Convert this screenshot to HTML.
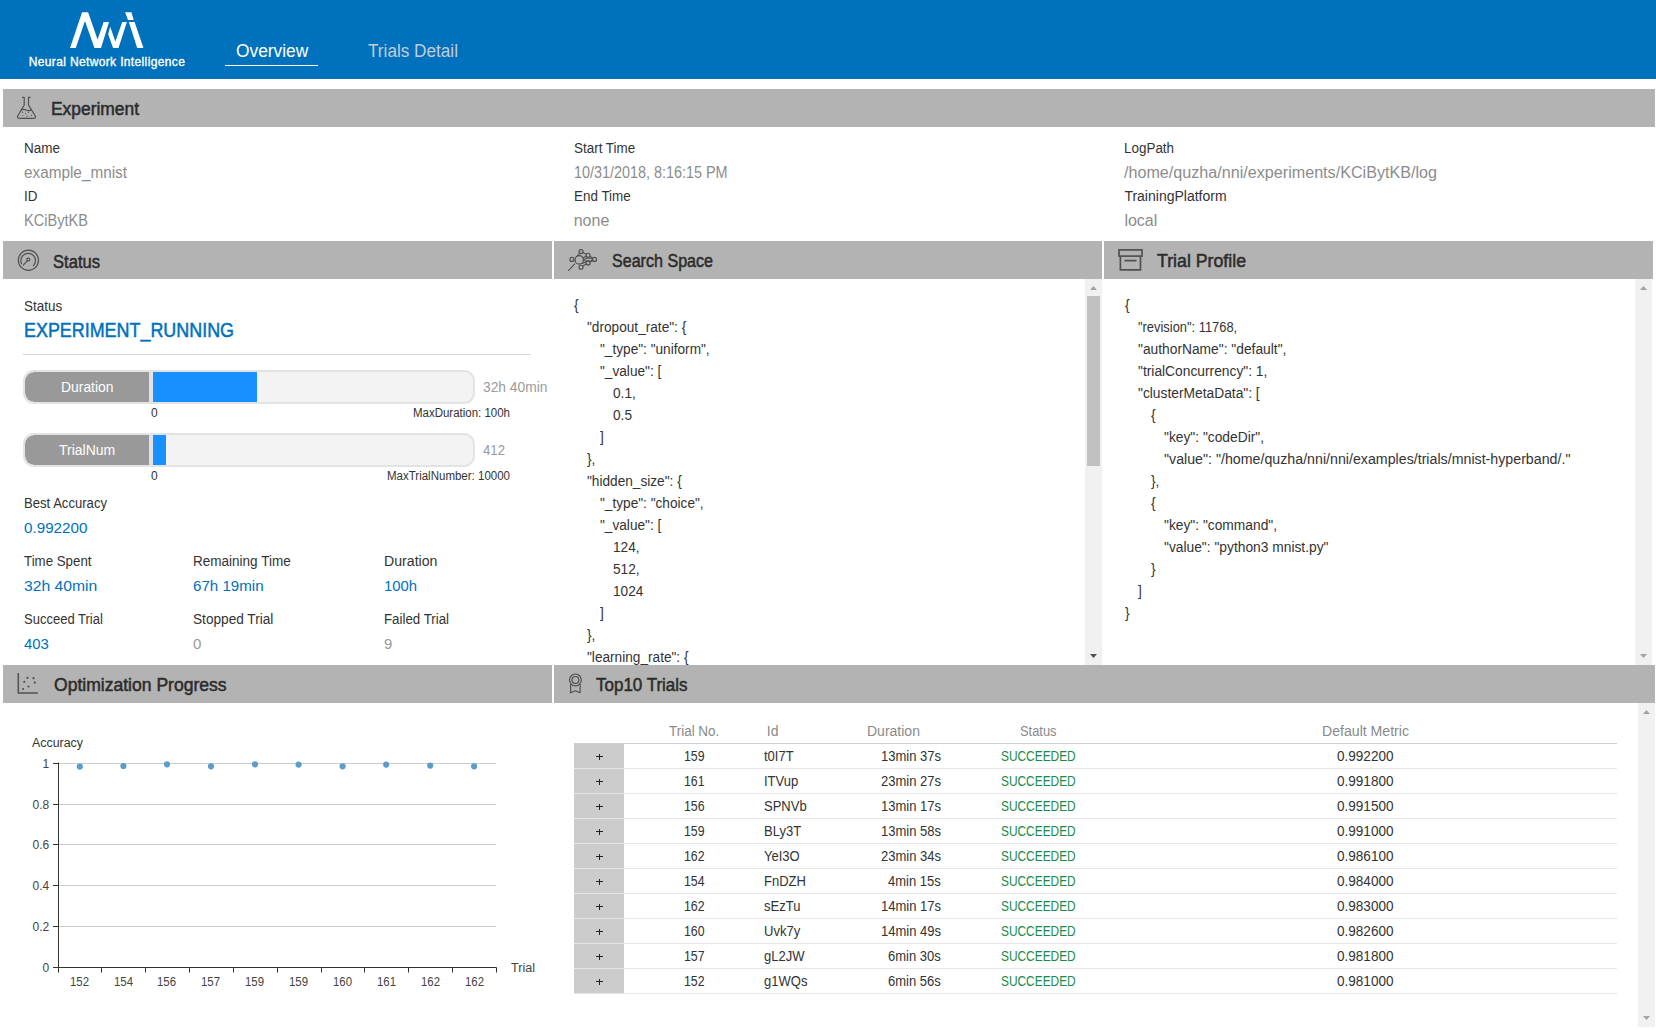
<!DOCTYPE html>
<html><head><meta charset="utf-8"><title>NNI</title>
<style>
html,body{margin:0;padding:0;width:1656px;height:1030px;overflow:hidden;background:#fff;position:relative;font-family:"Liberation Sans", sans-serif}
.t{position:absolute;white-space:pre;line-height:1;transform-origin:0 0}
.clipss{position:absolute;left:554px;top:279px;width:531px;height:386px;overflow:hidden}
</style></head><body>
<div style="position:absolute;left:0px;top:0px;width:1656px;height:79px;background:#0071bc;"></div>
<svg style="position:absolute;left:0;top:0" width="200" height="79" viewBox="0 0 200 79">
<g fill="#fff">
<polygon points="70.04,48.03 82.09,12.17 88.11,12.17 97.58,39.42 103.6,21.92 109.05,21.92 101.02,48.03 94.42,48.03 84.96,21.06 75.78,48.03"/>
<polygon points="108.19,34.26 110.2,26.8 115.36,41.43 122.25,21.92 126.84,21.92 118.52,48.03 113.07,48.03"/>
<polygon points="125.12,12.17 131.43,12.17 133.72,19.92 127.99,19.92"/>
<polygon points="128.85,21.92 134.58,21.92 143.48,48.03 137.17,48.03"/>
</g></svg>
<div style="position:absolute;left:225px;top:65px;width:93px;height:1px;background:#fff;"></div>
<div style="position:absolute;left:3px;top:89px;width:1652px;height:38px;background:#b3b3b3;"></div>
<div style="position:absolute;left:3px;top:241px;width:549px;height:38px;background:#b3b3b3;"></div>
<div style="position:absolute;left:554px;top:241px;width:548px;height:38px;background:#b3b3b3;"></div>
<div style="position:absolute;left:1104px;top:241px;width:549px;height:38px;background:#b3b3b3;"></div>
<div style="position:absolute;left:3px;top:665px;width:549px;height:38px;background:#b3b3b3;"></div>
<div style="position:absolute;left:554px;top:665px;width:1101px;height:38px;background:#b3b3b3;"></div>
<svg style="position:absolute;left:0;top:89px" width="50" height="38" viewBox="0 89 50 38">
<g fill="none" stroke="#505050" stroke-width="1.2" stroke-linejoin="round">
<path d="M22.1,97.4 H24.2 V105 L17.6,116.2 Q17.2,118.3 19,118.3 H34 Q35.8,118.3 35.4,116.2 L28.5,105 V97.4 H30.6"/>
<path d="M20.6,110.6 Q23,108.6 26,110 Q29,111.4 32,109.4"/>
</g>
<g fill="#505050"><circle cx="22.6" cy="112.2" r="0.6"/><circle cx="25.6" cy="113.5" r="0.6"/><circle cx="28.4" cy="112.3" r="0.6"/><circle cx="22.7" cy="115.5" r="0.6"/><circle cx="26.9" cy="116.2" r="0.6"/><circle cx="31.4" cy="115.4" r="0.6"/></g>
</svg>
<svg style="position:absolute;left:0;top:241px" width="50" height="38" viewBox="0 241 50 38">
<g fill="none" stroke="#505050" stroke-width="1.2" stroke-linecap="round">
<circle cx="28.4" cy="260.3" r="10.1"/>
<path d="M21.5,263.6 A7.3,7.3 0 1 1 33.5,265.6"/>
<circle cx="28.3" cy="259.6" r="1.5"/>
<path d="M27.2,260.8 L23.3,265.1"/>
</g></svg>
<svg style="position:absolute;left:554px;top:241px" width="60" height="38" viewBox="554 241 60 38">
<g fill="none" stroke="#505050" stroke-linecap="round">
<circle cx="579.2" cy="259.9" r="4.2" stroke-width="1.3"/>
<g stroke-width="1.15">
<circle cx="581" cy="251.6" r="2.0"/>
<circle cx="571.9" cy="259.4" r="2.0"/>
<circle cx="588.1" cy="255.2" r="2.0"/>
<circle cx="594.5" cy="259.4" r="2.0"/>
<circle cx="588.1" cy="262.9" r="2.0"/>
<circle cx="581" cy="267.2" r="2.0"/>
</g>
<rect x="584.6" y="258.3" width="7.6" height="2.8" rx="1.4" stroke-width="1.1"/>
<path stroke-width="1.1" d="M574.5,264.2 L568.7,270.4 M577.3,255.9 L579.6,253.4 M582.7,252.4 L586.4,254.3 M583.2,257.6 L586.5,256.2 M589.9,256.3 L592.8,258.3 M592.8,260.5 L589.9,261.9 M586.4,264.1 L582.7,266.1 M582.3,263.5 L586.4,261.6"/>
</g></svg>
<svg style="position:absolute;left:1104px;top:241px" width="50" height="38" viewBox="1104 241 50 38">
<g fill="none" stroke="#505050" stroke-width="1.7">
<rect x="1119" y="249.9" width="23" height="6.2"/>
<path d="M1120.4,256.7 V269.9 H1140.5 V256.7"/>
<path d="M1125.2,260.7 H1135.8" stroke-linecap="round"/>
</g></svg>
<svg style="position:absolute;left:0;top:665px" width="50" height="38" viewBox="0 665 50 38">
<path d="M18.3,673.1 V693 H37.8" fill="none" stroke="#505050" stroke-width="1.5"/>
<g fill="#505050"><circle cx="27.5" cy="677.9" r="1.1"/><circle cx="33.5" cy="678.2" r="1.1"/><circle cx="24.3" cy="681.8" r="1.1"/><circle cx="34.8" cy="682.7" r="1.1"/><circle cx="28.5" cy="686.5" r="1.1"/><circle cx="23.1" cy="689" r="1.1"/></g>
</svg>
<svg style="position:absolute;left:554px;top:665px" width="40" height="38" viewBox="554 665 40 38">
<g fill="none" stroke="#505050" stroke-width="1.2" stroke-linejoin="round">
<circle cx="575.4" cy="679.9" r="5.9"/>
<circle cx="575.4" cy="679.9" r="3.4"/>
<path d="M570.6,684 V692.8 L575.3,690.8 L580.1,692.8 V684"/>
</g></svg>
<div style="position:absolute;left:23px;top:354px;width:508px;height:1px;background:#d6d6d6;"></div>
<div style="position:absolute;left:23px;top:370px;width:448px;height:30px;border:2px solid #e3e3e3;border-radius:11px;background:#f3f3f3;overflow:hidden"><div style="position:absolute;left:0;top:0;width:124px;height:30px;background:#999;border-radius:9px 0 0 9px"></div><div style="position:absolute;left:124px;top:0;width:4px;height:30px;background:#e3e3e3"></div><div style="position:absolute;left:128px;top:0;width:104px;height:30px;background:#1890ff"></div></div>
<div style="position:absolute;left:23px;top:433px;width:448px;height:30px;border:2px solid #e3e3e3;border-radius:11px;background:#f3f3f3;overflow:hidden"><div style="position:absolute;left:0;top:0;width:124px;height:30px;background:#999;border-radius:9px 0 0 9px"></div><div style="position:absolute;left:124px;top:0;width:4px;height:30px;background:#e3e3e3"></div><div style="position:absolute;left:128px;top:0;width:13px;height:30px;background:#1890ff"></div></div>
<div style="position:absolute;left:1085px;top:279px;width:17px;height:386px;background:#f1f1f1;"></div>
<div style="position:absolute;left:1087px;top:296px;width:13px;height:170px;background:#c1c1c1;"></div>
<svg style="position:absolute;left:1085px;top:279px" width="17" height="386"><polygon points="8.5,7 12,11 5,11" fill="#a3a3a3"/><polygon points="5,375 12,375 8.5,379" fill="#505050"/></svg>
<div style="position:absolute;left:1635px;top:279px;width:17px;height:386px;background:#f1f1f1;"></div>
<svg style="position:absolute;left:1635px;top:279px" width="17" height="386"><polygon points="8.5,7 12,11 5,11" fill="#a3a3a3"/><polygon points="5,375 12,375 8.5,379" fill="#a3a3a3"/></svg>
<svg style="position:absolute;left:0;top:703px" width="552" height="327" viewBox="0 703 552 327"><line x1="58.5" y1="763.5" x2="496" y2="763.5" stroke="#cccccc" stroke-width="1"/><line x1="58.5" y1="804.5" x2="496" y2="804.5" stroke="#cccccc" stroke-width="1"/><line x1="58.5" y1="844.5" x2="496" y2="844.5" stroke="#cccccc" stroke-width="1"/><line x1="58.5" y1="885.5" x2="496" y2="885.5" stroke="#cccccc" stroke-width="1"/><line x1="58.5" y1="926.5" x2="496" y2="926.5" stroke="#cccccc" stroke-width="1"/><g stroke="#333" stroke-width="1"><line x1="58.5" y1="762.5" x2="58.5" y2="967.5"/><line x1="58.5" y1="967.5" x2="496.5" y2="967.5"/><line x1="53" y1="763.5" x2="58.5" y2="763.5"/><line x1="53" y1="804.5" x2="58.5" y2="804.5"/><line x1="53" y1="844.5" x2="58.5" y2="844.5"/><line x1="53" y1="885.5" x2="58.5" y2="885.5"/><line x1="53" y1="926.5" x2="58.5" y2="926.5"/><line x1="53" y1="967.5" x2="58.5" y2="967.5"/><line x1="58.5" y1="967.5" x2="58.5" y2="972.5"/><line x1="101.5" y1="967.5" x2="101.5" y2="972.5"/><line x1="145.5" y1="967.5" x2="145.5" y2="972.5"/><line x1="189.5" y1="967.5" x2="189.5" y2="972.5"/><line x1="233.5" y1="967.5" x2="233.5" y2="972.5"/><line x1="277.5" y1="967.5" x2="277.5" y2="972.5"/><line x1="321.5" y1="967.5" x2="321.5" y2="972.5"/><line x1="364.5" y1="967.5" x2="364.5" y2="972.5"/><line x1="408.5" y1="967.5" x2="408.5" y2="972.5"/><line x1="452.5" y1="967.5" x2="452.5" y2="972.5"/><line x1="496.5" y1="967.5" x2="496.5" y2="972.5"/></g><circle cx="79.8" cy="766.6" r="3.1" fill="#5a9dc9"/><circle cx="123.4" cy="766" r="3.1" fill="#5a9dc9"/><circle cx="167" cy="764.3" r="3.1" fill="#5a9dc9"/><circle cx="211" cy="766.3" r="3.1" fill="#5a9dc9"/><circle cx="255" cy="764.3" r="3.1" fill="#5a9dc9"/><circle cx="298.6" cy="764.6" r="3.1" fill="#5a9dc9"/><circle cx="342.6" cy="766.3" r="3.1" fill="#5a9dc9"/><circle cx="386.2" cy="764.6" r="3.1" fill="#5a9dc9"/><circle cx="430.2" cy="765.6" r="3.1" fill="#5a9dc9"/><circle cx="474.1" cy="766.3" r="3.1" fill="#5a9dc9"/></svg>
<div style="position:absolute;left:574px;top:743px;width:1043px;height:1px;background:#cfcfcf;"></div>
<div style="position:absolute;left:574px;top:744px;width:50px;height:24px;background:#cccccc;"></div>
<div style="position:absolute;left:574px;top:768px;width:1043px;height:1px;background:#e6e6e6;"></div>
<div style="position:absolute;left:595.5px;top:756px;width:7px;height:1px;background:#222"></div>
<div style="position:absolute;left:598.5px;top:753.5px;width:1px;height:6px;background:#222"></div>
<div style="position:absolute;left:574px;top:769px;width:50px;height:24px;background:#cccccc;"></div>
<div style="position:absolute;left:574px;top:793px;width:1043px;height:1px;background:#e6e6e6;"></div>
<div style="position:absolute;left:595.5px;top:781px;width:7px;height:1px;background:#222"></div>
<div style="position:absolute;left:598.5px;top:778.5px;width:1px;height:6px;background:#222"></div>
<div style="position:absolute;left:574px;top:794px;width:50px;height:24px;background:#cccccc;"></div>
<div style="position:absolute;left:574px;top:818px;width:1043px;height:1px;background:#e6e6e6;"></div>
<div style="position:absolute;left:595.5px;top:806px;width:7px;height:1px;background:#222"></div>
<div style="position:absolute;left:598.5px;top:803.5px;width:1px;height:6px;background:#222"></div>
<div style="position:absolute;left:574px;top:819px;width:50px;height:24px;background:#cccccc;"></div>
<div style="position:absolute;left:574px;top:843px;width:1043px;height:1px;background:#e6e6e6;"></div>
<div style="position:absolute;left:595.5px;top:831px;width:7px;height:1px;background:#222"></div>
<div style="position:absolute;left:598.5px;top:828.5px;width:1px;height:6px;background:#222"></div>
<div style="position:absolute;left:574px;top:844px;width:50px;height:24px;background:#cccccc;"></div>
<div style="position:absolute;left:574px;top:868px;width:1043px;height:1px;background:#e6e6e6;"></div>
<div style="position:absolute;left:595.5px;top:856px;width:7px;height:1px;background:#222"></div>
<div style="position:absolute;left:598.5px;top:853.5px;width:1px;height:6px;background:#222"></div>
<div style="position:absolute;left:574px;top:869px;width:50px;height:24px;background:#cccccc;"></div>
<div style="position:absolute;left:574px;top:893px;width:1043px;height:1px;background:#e6e6e6;"></div>
<div style="position:absolute;left:595.5px;top:881px;width:7px;height:1px;background:#222"></div>
<div style="position:absolute;left:598.5px;top:878.5px;width:1px;height:6px;background:#222"></div>
<div style="position:absolute;left:574px;top:894px;width:50px;height:24px;background:#cccccc;"></div>
<div style="position:absolute;left:574px;top:918px;width:1043px;height:1px;background:#e6e6e6;"></div>
<div style="position:absolute;left:595.5px;top:906px;width:7px;height:1px;background:#222"></div>
<div style="position:absolute;left:598.5px;top:903.5px;width:1px;height:6px;background:#222"></div>
<div style="position:absolute;left:574px;top:919px;width:50px;height:24px;background:#cccccc;"></div>
<div style="position:absolute;left:574px;top:943px;width:1043px;height:1px;background:#e6e6e6;"></div>
<div style="position:absolute;left:595.5px;top:931px;width:7px;height:1px;background:#222"></div>
<div style="position:absolute;left:598.5px;top:928.5px;width:1px;height:6px;background:#222"></div>
<div style="position:absolute;left:574px;top:944px;width:50px;height:24px;background:#cccccc;"></div>
<div style="position:absolute;left:574px;top:968px;width:1043px;height:1px;background:#e6e6e6;"></div>
<div style="position:absolute;left:595.5px;top:956px;width:7px;height:1px;background:#222"></div>
<div style="position:absolute;left:598.5px;top:953.5px;width:1px;height:6px;background:#222"></div>
<div style="position:absolute;left:574px;top:969px;width:50px;height:24px;background:#cccccc;"></div>
<div style="position:absolute;left:574px;top:993px;width:1043px;height:1px;background:#e6e6e6;"></div>
<div style="position:absolute;left:595.5px;top:981px;width:7px;height:1px;background:#222"></div>
<div style="position:absolute;left:598.5px;top:978.5px;width:1px;height:6px;background:#222"></div>
<div style="position:absolute;left:1638px;top:703px;width:17px;height:324px;background:#f1f1f1;"></div>
<svg style="position:absolute;left:1638px;top:703px" width="17" height="324"><polygon points="8.5,7 12,11 5,11" fill="#a3a3a3"/><polygon points="5,313 12,313 8.5,317" fill="#a3a3a3"/></svg>
<div style="position:absolute;left:0;top:0;width:1656px;height:665px;overflow:hidden"><div class="t" style="left:574.00px;top:298px;font-size:14px;color:#333;font-weight:400;transform:scaleX(0.9750);">{</div>
<div class="t" style="left:587.10px;top:320px;font-size:14px;color:#333;font-weight:400;transform:scaleX(0.9750);">&quot;dropout_rate&quot;: {</div>
<div class="t" style="left:600.20px;top:342px;font-size:14px;color:#333;font-weight:400;transform:scaleX(0.9750);">&quot;_type&quot;: &quot;uniform&quot;,</div>
<div class="t" style="left:600.20px;top:364px;font-size:14px;color:#333;font-weight:400;transform:scaleX(0.9750);">&quot;_value&quot;: [</div>
<div class="t" style="left:613.30px;top:386px;font-size:14px;color:#333;font-weight:400;transform:scaleX(0.9750);">0.1,</div>
<div class="t" style="left:613.30px;top:408px;font-size:14px;color:#333;font-weight:400;transform:scaleX(0.9750);">0.5</div>
<div class="t" style="left:600.20px;top:430px;font-size:14px;color:#333;font-weight:400;transform:scaleX(0.9750);">]</div>
<div class="t" style="left:587.10px;top:452px;font-size:14px;color:#333;font-weight:400;transform:scaleX(0.9750);">},</div>
<div class="t" style="left:587.10px;top:474px;font-size:14px;color:#333;font-weight:400;transform:scaleX(0.9750);">&quot;hidden_size&quot;: {</div>
<div class="t" style="left:600.20px;top:496px;font-size:14px;color:#333;font-weight:400;transform:scaleX(0.9750);">&quot;_type&quot;: &quot;choice&quot;,</div>
<div class="t" style="left:600.20px;top:518px;font-size:14px;color:#333;font-weight:400;transform:scaleX(0.9750);">&quot;_value&quot;: [</div>
<div class="t" style="left:613.30px;top:540px;font-size:14px;color:#333;font-weight:400;transform:scaleX(0.9750);">124,</div>
<div class="t" style="left:613.30px;top:562px;font-size:14px;color:#333;font-weight:400;transform:scaleX(0.9750);">512,</div>
<div class="t" style="left:613.30px;top:584px;font-size:14px;color:#333;font-weight:400;transform:scaleX(0.9750);">1024</div>
<div class="t" style="left:600.20px;top:606px;font-size:14px;color:#333;font-weight:400;transform:scaleX(0.9750);">]</div>
<div class="t" style="left:587.10px;top:628px;font-size:14px;color:#333;font-weight:400;transform:scaleX(0.9750);">},</div>
<div class="t" style="left:587.10px;top:650px;font-size:14px;color:#333;font-weight:400;transform:scaleX(0.9750);">&quot;learning_rate&quot;: {</div>
<div class="t" style="left:600.20px;top:672px;font-size:14px;color:#333;font-weight:400;transform:scaleX(0.9750);">&quot;_type&quot;: &quot;uniform&quot;,</div></div>
<div class="t" style="left:28.70px;top:56px;font-size:12px;color:#fff;font-weight:400;-webkit-text-stroke:0.35px #fff;letter-spacing:0.361px;">Neural Network Intelligence</div>
<div class="t" style="left:235.70px;top:42px;font-size:18px;color:#fff;font-weight:400;transform:scaleX(0.9638);">Overview</div>
<div class="t" style="left:367.80px;top:42px;font-size:18px;color:#c3ccd6;font-weight:400;transform:scaleX(0.9538);">Trials Detail</div>
<div class="t" style="left:50.70px;top:100px;font-size:18px;color:#2b2b2b;font-weight:400;transform:scaleX(0.9665);-webkit-text-stroke:0.5px #2b2b2b;">Experiment</div>
<div class="t" style="left:53.40px;top:253px;font-size:18px;color:#2b2b2b;font-weight:400;transform:scaleX(0.9210);-webkit-text-stroke:0.5px #2b2b2b;">Status</div>
<div class="t" style="left:611.70px;top:252px;font-size:18px;color:#2b2b2b;font-weight:400;transform:scaleX(0.8932);-webkit-text-stroke:0.5px #2b2b2b;">Search Space</div>
<div class="t" style="left:1156.60px;top:252px;font-size:18px;color:#2b2b2b;font-weight:400;transform:scaleX(0.9850);-webkit-text-stroke:0.5px #2b2b2b;">Trial Profile</div>
<div class="t" style="left:54.00px;top:676px;font-size:18px;color:#2b2b2b;font-weight:400;transform:scaleX(0.9747);-webkit-text-stroke:0.5px #2b2b2b;">Optimization Progress</div>
<div class="t" style="left:596.20px;top:676px;font-size:18px;color:#2b2b2b;font-weight:400;transform:scaleX(0.9437);-webkit-text-stroke:0.5px #2b2b2b;">Top10 Trials</div>
<div class="t" style="left:24.00px;top:141px;font-size:14px;color:#333;font-weight:400;transform:scaleX(0.9636);">Name</div>
<div class="t" style="left:24.00px;top:165px;font-size:16px;color:#8c8c8c;font-weight:400;transform:scaleX(0.9572);">example_mnist</div>
<div class="t" style="left:24.00px;top:189px;font-size:14px;color:#333;font-weight:400;transform:scaleX(0.9600);">ID</div>
<div class="t" style="left:24.00px;top:213px;font-size:16px;color:#8c8c8c;font-weight:400;transform:scaleX(0.9110);">KCiBytKB</div>
<div class="t" style="left:573.70px;top:141px;font-size:14px;color:#333;font-weight:400;transform:scaleX(0.9600);">Start Time</div>
<div class="t" style="left:573.70px;top:165px;font-size:16px;color:#8c8c8c;font-weight:400;transform:scaleX(0.8993);">10/31/2018, 8:16:15 PM</div>
<div class="t" style="left:573.70px;top:189px;font-size:14px;color:#333;font-weight:400;transform:scaleX(0.9600);">End Time</div>
<div class="t" style="left:573.70px;top:213px;font-size:16px;color:#8c8c8c;font-weight:400;">none</div>
<div class="t" style="left:1124.40px;top:141px;font-size:14px;color:#333;font-weight:400;transform:scaleX(0.9600);">LogPath</div>
<div class="t" style="left:1124.40px;top:165px;font-size:16px;color:#8c8c8c;font-weight:400;transform:scaleX(1.0084);">/home/quzha/nni/experiments/KCiBytKB/log</div>
<div class="t" style="left:1124.40px;top:189px;font-size:14px;color:#333;font-weight:400;">TrainingPlatform</div>
<div class="t" style="left:1124.40px;top:213px;font-size:16px;color:#8c8c8c;font-weight:400;">local</div>
<div class="t" style="left:24.00px;top:299px;font-size:14px;color:#333;font-weight:400;transform:scaleX(0.9600);">Status</div>
<div class="t" style="left:24.40px;top:320px;font-size:20px;color:#0071bc;font-weight:400;transform:scaleX(0.8956);-webkit-text-stroke:0.5px #0071bc;">EXPERIMENT_RUNNING</div>
<div class="t" style="left:60.75px;top:380px;font-size:14px;color:#fff;font-weight:400;transform:scaleX(0.9920);">Duration</div>
<div class="t" style="left:483.00px;top:380px;font-size:14px;color:#9a9a9a;font-weight:400;transform:scaleX(0.9849);">32h 40min</div>
<div class="t" style="left:151.00px;top:407px;font-size:12px;color:#333;font-weight:400;">0</div>
<div class="t" style="left:413.00px;top:407px;font-size:12px;color:#333;font-weight:400;transform:scaleX(0.9567);">MaxDuration: 100h</div>
<div class="t" style="left:59.00px;top:443px;font-size:14px;color:#fff;font-weight:400;">TrialNum</div>
<div class="t" style="left:483.00px;top:443px;font-size:14px;color:#9a9a9a;font-weight:400;transform:scaleX(0.9418);">412</div>
<div class="t" style="left:151.00px;top:470px;font-size:12px;color:#333;font-weight:400;">0</div>
<div class="t" style="left:387.00px;top:470px;font-size:12px;color:#333;font-weight:400;transform:scaleX(0.9588);">MaxTrialNumber: 10000</div>
<div class="t" style="left:24.00px;top:496px;font-size:14px;color:#333;font-weight:400;transform:scaleX(0.9357);">Best Accuracy</div>
<div class="t" style="left:24.00px;top:520px;font-size:15px;color:#0071bc;font-weight:400;transform:scaleX(1.0131);">0.992200</div>
<div class="t" style="left:24.00px;top:554px;font-size:14px;color:#333;font-weight:400;transform:scaleX(0.9497);">Time Spent</div>
<div class="t" style="left:193.00px;top:554px;font-size:14px;color:#333;font-weight:400;transform:scaleX(0.9658);">Remaining Time</div>
<div class="t" style="left:384.00px;top:554px;font-size:14px;color:#333;font-weight:400;transform:scaleX(1.0109);">Duration</div>
<div class="t" style="left:24.00px;top:578px;font-size:15px;color:#0071bc;font-weight:400;transform:scaleX(1.0462);">32h 40min</div>
<div class="t" style="left:193.00px;top:578px;font-size:15px;color:#0071bc;font-weight:400;transform:scaleX(1.0077);">67h 19min</div>
<div class="t" style="left:384.00px;top:578px;font-size:15px;color:#0071bc;font-weight:400;transform:scaleX(0.9888);">100h</div>
<div class="t" style="left:24.00px;top:612px;font-size:14px;color:#333;font-weight:400;transform:scaleX(0.9289);">Succeed Trial</div>
<div class="t" style="left:193.00px;top:612px;font-size:14px;color:#333;font-weight:400;transform:scaleX(0.9745);">Stopped Trial</div>
<div class="t" style="left:384.00px;top:612px;font-size:14px;color:#333;font-weight:400;transform:scaleX(0.9493);">Failed Trial</div>
<div class="t" style="left:24.00px;top:636px;font-size:15px;color:#0071bc;font-weight:400;transform:scaleX(0.9908);">403</div>
<div class="t" style="left:193.00px;top:636px;font-size:15px;color:#9a9a9a;font-weight:400;">0</div>
<div class="t" style="left:384.00px;top:636px;font-size:15px;color:#9a9a9a;font-weight:400;">9</div>
<div class="t" style="left:1124.50px;top:298px;font-size:14px;color:#333;font-weight:400;transform:scaleX(0.9850);">{</div>
<div class="t" style="left:1137.60px;top:320px;font-size:14px;color:#333;font-weight:400;transform:scaleX(0.9200);">&quot;revision&quot;: 11768,</div>
<div class="t" style="left:1137.60px;top:342px;font-size:14px;color:#333;font-weight:400;transform:scaleX(0.9850);">&quot;authorName&quot;: &quot;default&quot;,</div>
<div class="t" style="left:1137.60px;top:364px;font-size:14px;color:#333;font-weight:400;transform:scaleX(0.9850);">&quot;trialConcurrency&quot;: 1,</div>
<div class="t" style="left:1137.60px;top:386px;font-size:14px;color:#333;font-weight:400;transform:scaleX(0.9850);">&quot;clusterMetaData&quot;: [</div>
<div class="t" style="left:1150.70px;top:408px;font-size:14px;color:#333;font-weight:400;transform:scaleX(0.9850);">{</div>
<div class="t" style="left:1163.80px;top:430px;font-size:14px;color:#333;font-weight:400;transform:scaleX(0.9850);">&quot;key&quot;: &quot;codeDir&quot;,</div>
<div class="t" style="left:1163.80px;top:452px;font-size:14px;color:#333;font-weight:400;transform:scaleX(1.0150);">&quot;value&quot;: &quot;/home/quzha/nni/nni/examples/trials/mnist-hyperband/.&quot;</div>
<div class="t" style="left:1150.70px;top:474px;font-size:14px;color:#333;font-weight:400;transform:scaleX(0.9850);">},</div>
<div class="t" style="left:1150.70px;top:496px;font-size:14px;color:#333;font-weight:400;transform:scaleX(0.9850);">{</div>
<div class="t" style="left:1163.80px;top:518px;font-size:14px;color:#333;font-weight:400;transform:scaleX(0.9850);">&quot;key&quot;: &quot;command&quot;,</div>
<div class="t" style="left:1163.80px;top:540px;font-size:14px;color:#333;font-weight:400;transform:scaleX(0.9850);">&quot;value&quot;: &quot;python3 mnist.py&quot;</div>
<div class="t" style="left:1150.70px;top:562px;font-size:14px;color:#333;font-weight:400;transform:scaleX(0.9850);">}</div>
<div class="t" style="left:1137.60px;top:584px;font-size:14px;color:#333;font-weight:400;transform:scaleX(0.9850);">]</div>
<div class="t" style="left:1124.50px;top:606px;font-size:14px;color:#333;font-weight:400;transform:scaleX(0.9850);">}</div>
<div class="t" style="left:32.40px;top:737px;font-size:12px;color:#333;font-weight:400;transform:scaleX(1.0312);">Accuracy</div>
<div class="t" style="left:42.61px;top:758px;font-size:12px;color:#444;font-weight:400;">1</div>
<div class="t" style="left:32.61px;top:799px;font-size:12px;color:#444;font-weight:400;">0.8</div>
<div class="t" style="left:32.61px;top:839px;font-size:12px;color:#444;font-weight:400;">0.6</div>
<div class="t" style="left:32.61px;top:880px;font-size:12px;color:#444;font-weight:400;">0.4</div>
<div class="t" style="left:32.61px;top:921px;font-size:12px;color:#444;font-weight:400;">0.2</div>
<div class="t" style="left:42.61px;top:962px;font-size:12px;color:#444;font-weight:400;">0</div>
<div class="t" style="left:70.29px;top:976px;font-size:12px;color:#444;font-weight:400;transform:scaleX(0.9500);">152</div>
<div class="t" style="left:113.89px;top:976px;font-size:12px;color:#444;font-weight:400;transform:scaleX(0.9500);">154</div>
<div class="t" style="left:157.49px;top:976px;font-size:12px;color:#444;font-weight:400;transform:scaleX(0.9500);">156</div>
<div class="t" style="left:201.49px;top:976px;font-size:12px;color:#444;font-weight:400;transform:scaleX(0.9500);">157</div>
<div class="t" style="left:245.49px;top:976px;font-size:12px;color:#444;font-weight:400;transform:scaleX(0.9500);">159</div>
<div class="t" style="left:289.09px;top:976px;font-size:12px;color:#444;font-weight:400;transform:scaleX(0.9500);">159</div>
<div class="t" style="left:333.09px;top:976px;font-size:12px;color:#444;font-weight:400;transform:scaleX(0.9500);">160</div>
<div class="t" style="left:376.69px;top:976px;font-size:12px;color:#444;font-weight:400;transform:scaleX(0.9500);">161</div>
<div class="t" style="left:420.69px;top:976px;font-size:12px;color:#444;font-weight:400;transform:scaleX(0.9500);">162</div>
<div class="t" style="left:464.59px;top:976px;font-size:12px;color:#444;font-weight:400;transform:scaleX(0.9500);">162</div>
<div class="t" style="left:511.00px;top:962px;font-size:12px;color:#444;font-weight:400;transform:scaleX(1.0485);">Trial</div>
<div class="t" style="left:669.35px;top:724px;font-size:14px;color:#8a8a8a;font-weight:400;transform:scaleX(0.9601);">Trial No.</div>
<div class="t" style="left:766.80px;top:724px;font-size:14px;color:#8a8a8a;font-weight:400;">Id</div>
<div class="t" style="left:867.00px;top:724px;font-size:14px;color:#8a8a8a;font-weight:400;">Duration</div>
<div class="t" style="left:1020.45px;top:724px;font-size:14px;color:#8a8a8a;font-weight:400;transform:scaleX(0.9193);">Status</div>
<div class="t" style="left:1322.00px;top:724px;font-size:14px;color:#8a8a8a;font-weight:400;transform:scaleX(1.0074);">Default Metric</div>
<div class="t" style="left:683.72px;top:749px;font-size:14px;color:#333;font-weight:400;transform:scaleX(0.8800);">159</div>
<div class="t" style="left:764.00px;top:749px;font-size:14px;color:#333;font-weight:400;transform:scaleX(0.9300);">t0I7T</div>
<div class="t" style="left:880.93px;top:749px;font-size:14px;color:#333;font-weight:400;transform:scaleX(0.9300);">13min 37s</div>
<div class="t" style="left:1001.45px;top:749px;font-size:14px;color:#1a8a47;font-weight:400;transform:scaleX(0.8498);">SUCCEEDED</div>
<div class="t" style="left:1337.05px;top:749px;font-size:14px;color:#333;font-weight:400;transform:scaleX(0.9674);">0.992200</div>
<div class="t" style="left:683.72px;top:774px;font-size:14px;color:#333;font-weight:400;transform:scaleX(0.8800);">161</div>
<div class="t" style="left:764.00px;top:774px;font-size:14px;color:#333;font-weight:400;transform:scaleX(0.9300);">ITVup</div>
<div class="t" style="left:880.93px;top:774px;font-size:14px;color:#333;font-weight:400;transform:scaleX(0.9300);">23min 27s</div>
<div class="t" style="left:1001.45px;top:774px;font-size:14px;color:#1a8a47;font-weight:400;transform:scaleX(0.8498);">SUCCEEDED</div>
<div class="t" style="left:1337.05px;top:774px;font-size:14px;color:#333;font-weight:400;transform:scaleX(0.9674);">0.991800</div>
<div class="t" style="left:683.72px;top:799px;font-size:14px;color:#333;font-weight:400;transform:scaleX(0.8800);">156</div>
<div class="t" style="left:764.00px;top:799px;font-size:14px;color:#333;font-weight:400;transform:scaleX(0.9300);">SPNVb</div>
<div class="t" style="left:880.93px;top:799px;font-size:14px;color:#333;font-weight:400;transform:scaleX(0.9300);">13min 17s</div>
<div class="t" style="left:1001.45px;top:799px;font-size:14px;color:#1a8a47;font-weight:400;transform:scaleX(0.8498);">SUCCEEDED</div>
<div class="t" style="left:1337.05px;top:799px;font-size:14px;color:#333;font-weight:400;transform:scaleX(0.9674);">0.991500</div>
<div class="t" style="left:683.72px;top:824px;font-size:14px;color:#333;font-weight:400;transform:scaleX(0.8800);">159</div>
<div class="t" style="left:764.00px;top:824px;font-size:14px;color:#333;font-weight:400;transform:scaleX(0.9300);">BLy3T</div>
<div class="t" style="left:880.93px;top:824px;font-size:14px;color:#333;font-weight:400;transform:scaleX(0.9300);">13min 58s</div>
<div class="t" style="left:1001.45px;top:824px;font-size:14px;color:#1a8a47;font-weight:400;transform:scaleX(0.8498);">SUCCEEDED</div>
<div class="t" style="left:1337.05px;top:824px;font-size:14px;color:#333;font-weight:400;transform:scaleX(0.9674);">0.991000</div>
<div class="t" style="left:683.72px;top:849px;font-size:14px;color:#333;font-weight:400;transform:scaleX(0.8800);">162</div>
<div class="t" style="left:764.00px;top:849px;font-size:14px;color:#333;font-weight:400;transform:scaleX(0.9300);">YeI3O</div>
<div class="t" style="left:880.93px;top:849px;font-size:14px;color:#333;font-weight:400;transform:scaleX(0.9300);">23min 34s</div>
<div class="t" style="left:1001.45px;top:849px;font-size:14px;color:#1a8a47;font-weight:400;transform:scaleX(0.8498);">SUCCEEDED</div>
<div class="t" style="left:1337.05px;top:849px;font-size:14px;color:#333;font-weight:400;transform:scaleX(0.9674);">0.986100</div>
<div class="t" style="left:683.72px;top:874px;font-size:14px;color:#333;font-weight:400;transform:scaleX(0.8800);">154</div>
<div class="t" style="left:764.00px;top:874px;font-size:14px;color:#333;font-weight:400;transform:scaleX(0.9300);">FnDZH</div>
<div class="t" style="left:888.16px;top:874px;font-size:14px;color:#333;font-weight:400;transform:scaleX(0.9300);">4min 15s</div>
<div class="t" style="left:1001.45px;top:874px;font-size:14px;color:#1a8a47;font-weight:400;transform:scaleX(0.8498);">SUCCEEDED</div>
<div class="t" style="left:1337.05px;top:874px;font-size:14px;color:#333;font-weight:400;transform:scaleX(0.9674);">0.984000</div>
<div class="t" style="left:683.72px;top:899px;font-size:14px;color:#333;font-weight:400;transform:scaleX(0.8800);">162</div>
<div class="t" style="left:764.00px;top:899px;font-size:14px;color:#333;font-weight:400;transform:scaleX(0.9300);">sEzTu</div>
<div class="t" style="left:880.93px;top:899px;font-size:14px;color:#333;font-weight:400;transform:scaleX(0.9300);">14min 17s</div>
<div class="t" style="left:1001.45px;top:899px;font-size:14px;color:#1a8a47;font-weight:400;transform:scaleX(0.8498);">SUCCEEDED</div>
<div class="t" style="left:1337.05px;top:899px;font-size:14px;color:#333;font-weight:400;transform:scaleX(0.9674);">0.983000</div>
<div class="t" style="left:683.72px;top:924px;font-size:14px;color:#333;font-weight:400;transform:scaleX(0.8800);">160</div>
<div class="t" style="left:764.00px;top:924px;font-size:14px;color:#333;font-weight:400;transform:scaleX(0.9300);">Uvk7y</div>
<div class="t" style="left:880.93px;top:924px;font-size:14px;color:#333;font-weight:400;transform:scaleX(0.9300);">14min 49s</div>
<div class="t" style="left:1001.45px;top:924px;font-size:14px;color:#1a8a47;font-weight:400;transform:scaleX(0.8498);">SUCCEEDED</div>
<div class="t" style="left:1337.05px;top:924px;font-size:14px;color:#333;font-weight:400;transform:scaleX(0.9674);">0.982600</div>
<div class="t" style="left:683.72px;top:949px;font-size:14px;color:#333;font-weight:400;transform:scaleX(0.8800);">157</div>
<div class="t" style="left:764.00px;top:949px;font-size:14px;color:#333;font-weight:400;transform:scaleX(0.9300);">gL2JW</div>
<div class="t" style="left:888.16px;top:949px;font-size:14px;color:#333;font-weight:400;transform:scaleX(0.9300);">6min 30s</div>
<div class="t" style="left:1001.45px;top:949px;font-size:14px;color:#1a8a47;font-weight:400;transform:scaleX(0.8498);">SUCCEEDED</div>
<div class="t" style="left:1337.05px;top:949px;font-size:14px;color:#333;font-weight:400;transform:scaleX(0.9674);">0.981800</div>
<div class="t" style="left:683.72px;top:974px;font-size:14px;color:#333;font-weight:400;transform:scaleX(0.8800);">152</div>
<div class="t" style="left:764.00px;top:974px;font-size:14px;color:#333;font-weight:400;transform:scaleX(0.9300);">g1WQs</div>
<div class="t" style="left:888.16px;top:974px;font-size:14px;color:#333;font-weight:400;transform:scaleX(0.9300);">6min 56s</div>
<div class="t" style="left:1001.45px;top:974px;font-size:14px;color:#1a8a47;font-weight:400;transform:scaleX(0.8498);">SUCCEEDED</div>
<div class="t" style="left:1337.05px;top:974px;font-size:14px;color:#333;font-weight:400;transform:scaleX(0.9674);">0.981000</div>
</body></html>
